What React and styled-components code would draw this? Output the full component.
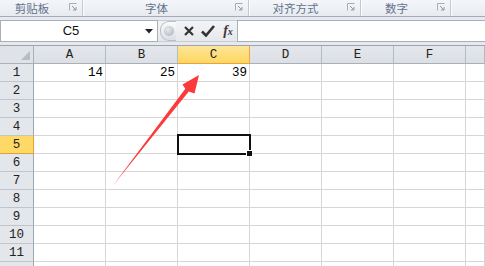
import React from "react";
import styled, { createGlobalStyle } from "styled-components";

const Global = createGlobalStyle`
  html, body { margin: 0; padding: 0; background: #fff; overflow: hidden; }
  #root { width: 485px; height: 266px; overflow: hidden; position: relative; }
`;

const Page = styled.div`
  width: 485px;
  height: 266px;
  overflow: hidden;
  display: flex;
  flex-direction: column;
  font-family: "Liberation Mono", monospace;
  & > * {
    flex-shrink: 0;
  }
`;

const LabelBar = styled.div`
  display: flex;
  height: 16px;
  background: linear-gradient(#f4f6f9, #e7ebf0);
  border-bottom: 1px solid #a3abb6;
`;

const Group = styled.div`
  display: flex;
  width: ${(p) => p.$w}px;
  flex: ${(p) => (p.$grow ? 1 : "none")};
  border-right: ${(p) => (p.$grow ? "none" : "1px solid #c3c9d1")};
  box-shadow: ${(p) => (p.$grow ? "none" : "1px 0 0 #fbfcfd")};
`;

const GroupLabel = styled.div`
  flex: 1;
  text-align: center;
  font-family: "Noto Sans CJK SC", sans-serif;
  font-size: 11.5px;
  line-height: 16px;
  color: #64738b;
`;

const Launcher = styled.div`
  width: 18px;
  display: flex;
  align-items: center;
  justify-content: center;
  padding-bottom: 3px;
`;

const Band = styled.div`
  height: 3px;
  background: #e6e9ee;
`;

const FormulaRow = styled.div`
  display: flex;
  height: 22px;
  background: #eceef1;
`;

const NameBox = styled.div`
  width: 158px;
  display: flex;
  box-sizing: border-box;
  background: #fff;
  border: 1px solid #a9afb7;
`;

const NameText = styled.div`
  flex: 1;
  text-align: center;
  font-family: "Liberation Sans", sans-serif;
  font-size: 13px;
  line-height: 20px;
  color: #111;
`;

const DropArrow = styled.div`
  width: 16px;
  display: flex;
  align-items: center;
  justify-content: center;
`;

const FxTools = styled.div`
  width: 79px;
  display: flex;
  align-items: center;
  box-sizing: border-box;
  border-top: 1px solid #c9ced5;
  border-bottom: 1px solid #c9ced5;
  background: linear-gradient(#f3f4f6, #e6e8ec);
`;

const Grip = styled.div`
  width: 15px;
  height: 18px;
  margin-left: 2px;
  border-radius: 9px 0 0 9px;
  background: linear-gradient(#fbfbfc, #dcdfe3);
  border: 1px solid #b9bec5;
  border-right: none;
  display: flex;
  align-items: center;
  justify-content: center;
`;

const GripDot = styled.div`
  width: 10px;
  height: 10px;
  border-radius: 50%;
  background: radial-gradient(circle at 40% 35%, #e8eaed, #a9aeb5);
`;

const ToolIcon = styled.div`
  width: ${(p) => p.$w}px;
  margin-left: ${(p) => p.$ml}px;
  display: flex;
  align-items: center;
  justify-content: center;
`;

const FxText = styled.span`
  font-family: "Liberation Serif", serif;
  font-style: italic;
  font-weight: bold;
  color: #3a3a3a;
  font-size: 14px;
  line-height: 18px;
  & > small {
    font-size: 10px;
  }
`;

const FormulaInput = styled.div`
  flex: 1;
  background: #fff;
  border: 1px solid #a9afb7;
  border-right: none;
`;

const Sheet = styled.div`
  display: grid;
  grid-template-columns: 34px repeat(6, 72px) 1fr;
  grid-auto-rows: 18px;
  border-top: 1px solid #9ea5af;
`;

const Corner = styled.div`
  box-sizing: border-box;
  background: #dfe3e8;
  border-right: 1px solid #a9b0b9;
  border-bottom: 1px solid #a9b0b9;
  position: relative;
  &::after {
    content: "";
    position: absolute;
    right: 3px;
    bottom: 3px;
    width: 0;
    height: 0;
    border-left: 9px solid transparent;
    border-bottom: 9px solid #b6bcc4;
  }
`;

const ColHead = styled.div`
  box-sizing: border-box;
  background: ${(p) =>
    p.$sel ? "linear-gradient(#fde59a, #ffd75e)" : "linear-gradient(#e3e6eb, #dcdfe4)"};
  border-right: 1px solid ${(p) => (p.$sel ? "#eaa648" : "#b4bac3")};
  border-bottom: 1px solid ${(p) => (p.$sel ? "#e8a140" : "#a9b0b9")};
  text-align: center;
  font-size: 12.5px;
  line-height: 18px;
  color: #222;
`;

const RowHead = styled.div`
  box-sizing: border-box;
  background: ${(p) => (p.$sel ? "#ffd966" : "#e3e6eb")};
  border-right: 1px solid ${(p) => (p.$sel ? "#e2a03a" : "#9ea6b0")};
  border-bottom: 1px solid ${(p) => (p.$sel ? "#e2a03a" : "#bfc5cd")};
  text-align: center;
  font-size: 12.5px;
  line-height: 18px;
  color: #222;
`;

const Cell = styled.div`
  box-sizing: border-box;
  background: #fff;
  border-right: 1px solid #d6d6d6;
  border-bottom: 1px solid #d6d6d6;
  text-align: right;
  padding-right: 2px;
  font-size: 12.5px;
  line-height: 18px;
  color: #000;
  position: relative;
  z-index: ${(p) => (p.$active ? 2 : 0)};
  &::after {
    content: "";
    display: ${(p) => (p.$active ? "block" : "none")};
    position: absolute;
    top: -2px;
    left: -1px;
    right: -2px;
    bottom: -2px;
    border: 2px solid #111;
  }
  &::before {
    content: "";
    display: ${(p) => (p.$active ? "block" : "none")};
    position: absolute;
    right: -3px;
    bottom: -3px;
    width: 5px;
    height: 5px;
    background: #111;
    box-shadow: -1px -1px 0 #fff;
    z-index: 3;
  }
`;

const Overlay = styled.svg`
  position: absolute;
  left: 0;
  top: 0;
  pointer-events: none;
  z-index: 10;
`;

const LauncherIcon = () => (
  <svg width="8" height="8" viewBox="0 0 8 8">
    <path d="M0.5 7.5V0.5H7.5" fill="none" stroke="#a7adb6" strokeWidth="1" />
    <path d="M3 3L7 7M7 4V7H4" fill="none" stroke="#8f96a1" strokeWidth="1" />
  </svg>
);

const groups = [
  { label: "剪贴板", w: 82 },
  { label: "字体", w: 165 },
  { label: "对齐方式", w: 111 },
  { label: "数字", w: 89 },
];

const cols = ["A", "B", "C", "D", "E", "F", ""];
const values = { "1A": "14", "1B": "25", "1C": "39" };
const VISIBLE_LABELS = 11;

export default function App() {
  const rows = Array.from({ length: 12 }, (_, i) => i + 1);
  return (
    <>
      <Global />
      <Page>
        <LabelBar>
          {groups.map((g) => (
            <Group key={g.label} $w={g.w}>
              <GroupLabel>{g.label}</GroupLabel>
              <Launcher>
                <LauncherIcon />
              </Launcher>
            </Group>
          ))}
          <Group $grow />
        </LabelBar>
        <Band />
        <FormulaRow>
          <NameBox>
            <NameText>C5</NameText>
            <DropArrow>
              <svg width="8" height="5" viewBox="0 0 8 5">
                <path d="M0 0H8L4 4.5Z" fill="#222" />
              </svg>
            </DropArrow>
          </NameBox>
          <FxTools>
            <Grip>
              <GripDot />
            </Grip>
            <ToolIcon $w={12} $ml={7}>
              <svg width="10" height="10" viewBox="0 0 10 10">
                <path d="M1 1L9 9M9 1L1 9" stroke="#333" strokeWidth="2.2" />
              </svg>
            </ToolIcon>
            <ToolIcon $w={16} $ml={5}>
              <svg width="14" height="12" viewBox="0 0 14 12">
                <path d="M1 6.5L5 10.5L13 1" fill="none" stroke="#333" strokeWidth="2.6" />
              </svg>
            </ToolIcon>
            <ToolIcon $w={14} $ml={5}>
              <FxText>
                f<small>x</small>
              </FxText>
            </ToolIcon>
          </FxTools>
          <FormulaInput />
        </FormulaRow>
        <Band />
        <Sheet>
          <Corner />
          {cols.map((c, i) => (
            <ColHead key={"h" + i} $sel={c === "C"}>
              {c}
            </ColHead>
          ))}
          {rows.map((r) => (
            <React.Fragment key={r}>
              <RowHead $sel={r === 5}>{r <= VISIBLE_LABELS ? r : ""}</RowHead>
              {cols.map((c, i) => (
                <Cell key={r + "-" + i} $active={r === 5 && c === "C"}>
                  {values[r + c] || ""}
                </Cell>
              ))}
            </React.Fragment>
          ))}
        </Sheet>
      </Page>
      <Overlay width="485" height="266" viewBox="0 0 485 266">
        <polygon
          points="199,75 194.5,93.5 188.8,91.6 113,185.5 185.3,88.8 182.5,84.5"
          fill="#fb3b3b"
        />
      </Overlay>
    </>
  );
}
